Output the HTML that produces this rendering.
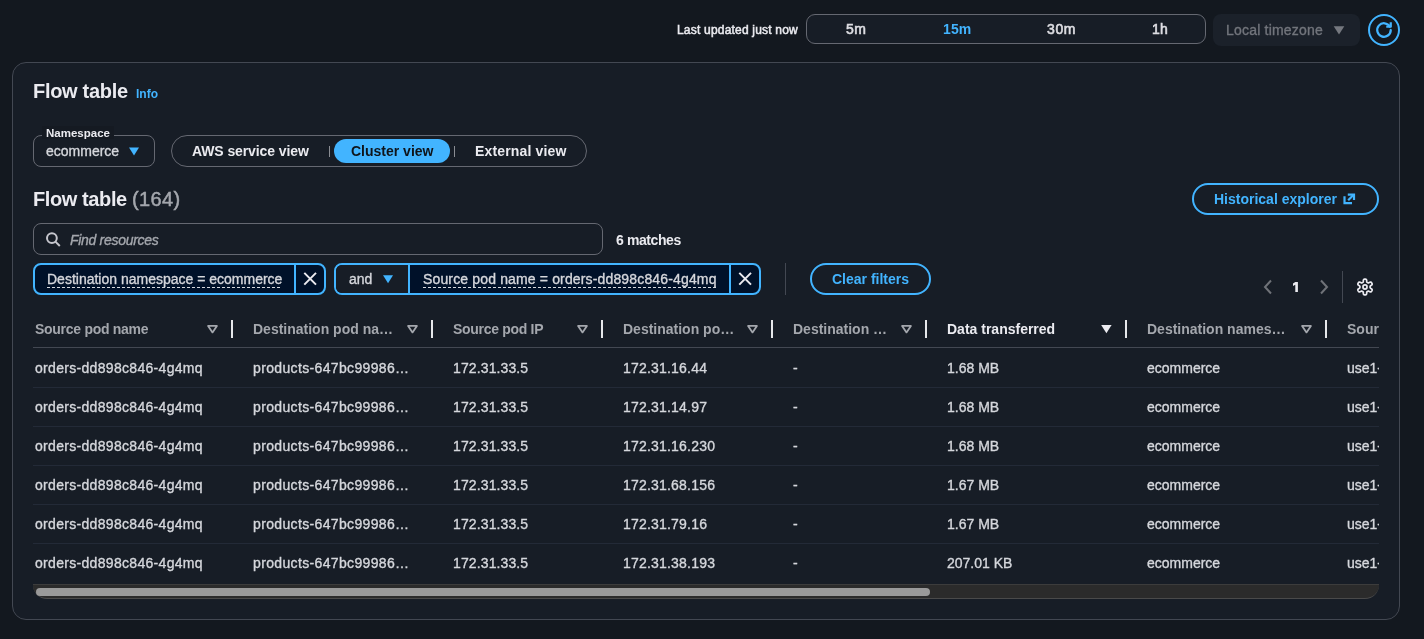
<!DOCTYPE html>
<html><head><meta charset="utf-8"><style>
html,body{margin:0;padding:0;}
body{width:1424px;height:639px;overflow:hidden;background:#13181f;position:relative;font-family:"Liberation Sans",sans-serif;}
.t{position:absolute;white-space:nowrap;will-change:transform;}
.r{position:absolute;}
</style></head><body>
<div class="t" style="left:677px;top:21.94px;font-size:12px;line-height:17px;font-weight:normal;color:#ebebf0;-webkit-text-stroke:0.35px #ebebf0;-webkit-text-stroke:0.5px #ebebf0;letter-spacing:0.2px;">Last updated just now</div>
<div class="r" style="left:806px;top:14px;width:400px;height:30px;background:#171d26;border:1px solid #656871;border-radius:9px;box-sizing:border-box;"></div>
<div class="t" style="left:845.6px;top:19.35px;font-size:14px;line-height:20px;font-weight:normal;color:#dedee3;-webkit-text-stroke:0.35px #dedee3;-webkit-text-stroke:0.6px #dedee3;letter-spacing:0.5px;">5m</div>
<div class="t" style="left:942.5px;top:19.35px;font-size:14px;line-height:20px;font-weight:bold;color:#42b4ff;letter-spacing:0.1px;">15m</div>
<div class="t" style="left:1046.6px;top:19.35px;font-size:14px;line-height:20px;font-weight:normal;color:#dedee3;-webkit-text-stroke:0.35px #dedee3;-webkit-text-stroke:0.6px #dedee3;letter-spacing:0.6px;">30m</div>
<div class="t" style="left:1151.6px;top:19.35px;font-size:14px;line-height:20px;font-weight:normal;color:#dedee3;-webkit-text-stroke:0.35px #dedee3;-webkit-text-stroke:0.6px #dedee3;letter-spacing:0.1px;">1h</div>
<div class="r" style="left:1213px;top:14px;width:147px;height:32px;background:#1b212a;border-radius:8px;"></div>
<div class="t" style="left:1225.5px;top:19.75px;font-size:14px;line-height:20px;font-weight:normal;color:#72757c;-webkit-text-stroke:0.35px #72757c;letter-spacing:0.2px;">Local timezone</div>
<svg class="r" style="left:1333px;top:26px" width="12" height="9" viewBox="0 0 12 9"><path d="M0.7 0.3 L11.3 0.3 L6 8.5 Z" fill="#75787f"/></svg>
<div class="r" style="left:1368px;top:14px;width:32px;height:32px;border:2px solid #42b4ff;border-radius:50%;box-sizing:border-box;"></div>
<svg class="r" style="left:1375px;top:21px" width="18" height="18" viewBox="0 0 16 16"><path d="M10 5 H14 V1" fill="none" stroke="#42b4ff" stroke-width="2" stroke-linejoin="round"/><path d="M14 8 A6 6 0 1 1 13.2 5" fill="none" stroke="#42b4ff" stroke-width="2" stroke-linecap="round"/></svg>
<div class="r" style="left:12px;top:62px;width:1388px;height:558px;background:#171d26;border:1px solid #434852;border-radius:14px;box-sizing:border-box;"></div>
<div class="t" style="left:32.6px;top:76.97px;font-size:20px;line-height:28px;font-weight:bold;color:#ebebf0;letter-spacing:-0.3px;">Flow table</div>
<div class="t" style="left:136.3px;top:86.14px;font-size:12px;line-height:17px;font-weight:bold;color:#42b4ff;">Info</div>
<div class="r" style="left:33px;top:135px;width:122px;height:32px;border:1px solid #656871;border-radius:8px;box-sizing:border-box;"></div>
<div class="r" style="left:42px;top:126px;width:72px;height:13px;background:#151a22;"></div>
<div class="t" style="left:45.8px;top:124.91px;font-size:11.5px;line-height:16px;font-weight:bold;color:#ebebf0;">Namespace</div>
<div class="t" style="left:45.8px;top:140.95px;font-size:14px;line-height:20px;font-weight:normal;color:#d5d7dc;-webkit-text-stroke:0.35px #d5d7dc;">ecommerce</div>
<svg class="r" style="left:128px;top:147px" width="12" height="9" viewBox="0 0 12 9"><path d="M1 0.5 L11 0.5 L6 8.5 Z" fill="#42b4ff"/></svg>
<div class="r" style="left:171px;top:135px;width:416px;height:32px;border:1px solid #656871;border-radius:16px;box-sizing:border-box;"></div>
<div class="t" style="left:192px;top:140.85px;font-size:14px;line-height:20px;font-weight:bold;color:#ebebf0;letter-spacing:-0.1px;">AWS service view</div>
<div class="r" style="left:329px;top:146px;width:1px;height:11px;background:#8a8d93;"></div>
<div class="r" style="left:334px;top:139px;width:116px;height:24px;background:#42b4ff;border-radius:12px;"></div>
<div class="t" style="left:350.5px;top:140.85px;font-size:14px;line-height:20px;font-weight:bold;color:#0f141a;">Cluster view</div>
<div class="r" style="left:454px;top:146px;width:1px;height:11px;background:#8a8d93;"></div>
<div class="t" style="left:475.3px;top:140.85px;font-size:14px;line-height:20px;font-weight:bold;color:#ebebf0;letter-spacing:0.15px;">External view</div>
<div class="t" style="left:32.6px;top:185.37px;font-size:20px;line-height:28px;font-weight:bold;color:#ebebf0;letter-spacing:-0.4px;">Flow table <span style="font-weight:normal;color:#a4a7ad;-webkit-text-stroke:0.5px #a4a7ad;letter-spacing:0.4px">(164)</span></div>
<div class="r" style="left:1192px;top:183px;width:187px;height:32px;border:2px solid #42b4ff;border-radius:16px;box-sizing:border-box;"></div>
<div class="t" style="left:1214.3px;top:189.15px;font-size:14px;line-height:20px;font-weight:bold;color:#42b4ff;">Historical explorer</div>
<svg class="r" style="left:1342px;top:192px" width="14" height="14" viewBox="0 0 14 14"><path d="M2.5 4.2 V11.2 H10" fill="none" stroke="#42b4ff" stroke-width="2.2"/><path d="M5.8 2.6 H12 V8" fill="none" stroke="#42b4ff" stroke-width="2.2"/><path d="M6.2 8.2 L11.6 2.8" fill="none" stroke="#42b4ff" stroke-width="2.2"/></svg>
<div class="r" style="left:33px;top:223px;width:570px;height:32px;border:1px solid #656871;border-radius:8px;box-sizing:border-box;"></div>
<svg class="r" style="left:45px;top:231px" width="16" height="16" viewBox="0 0 16 16"><circle cx="6.9" cy="7.1" r="4.9" fill="none" stroke="#c6c6cd" stroke-width="2"/><path d="M10.4 10.6 L14.8 15" stroke="#c6c6cd" stroke-width="2"/></svg>
<div class="t" style="left:69.8px;top:230.15px;font-size:14px;line-height:20px;font-weight:normal;color:#a4a7ad;-webkit-text-stroke:0.35px #a4a7ad;font-style:italic;letter-spacing:-0.3px;">Find resources</div>
<div class="t" style="left:616px;top:230.15px;font-size:14px;line-height:20px;font-weight:bold;color:#ebebf0;letter-spacing:-0.4px;">6 matches</div>
<div class="r" style="left:33px;top:263px;width:293px;height:32px;background:#001129;border:2px solid #42b4ff;border-radius:8px;box-sizing:border-box;"></div>
<div class="r" style="left:294px;top:263px;width:2px;height:32px;background:#42b4ff;"></div>
<div class="t" style="left:46.9px;top:268.95px;font-size:14px;line-height:20px;font-weight:normal;color:#d5d7dc;-webkit-text-stroke:0.35px #d5d7dc;">Destination namespace = ecommerce</div>
<div class="r" style="left:47px;top:287px;width:235px;height:1px;background:repeating-linear-gradient(90deg,#d5d7dc 0 3px,transparent 3px 5px);"></div>
<svg class="r" style="left:302px;top:270px" width="16" height="16" viewBox="0 0 16 16"><path d="M2.3 2.9 L14 14.6 M14 2.9 L2.3 14.6" stroke="#ebebf0" stroke-width="2"/></svg>
<div class="r" style="left:334px;top:263px;width:427px;height:32px;background:#001129;border:2px solid #42b4ff;border-radius:8px;box-sizing:border-box;"></div>
<div class="r" style="left:336px;top:265px;width:72px;height:28px;background:#171d26;border-radius:6px 0 0 6px;"></div>
<div class="r" style="left:408px;top:263px;width:2px;height:32px;background:#42b4ff;"></div>
<div class="r" style="left:729px;top:263px;width:2px;height:32px;background:#42b4ff;"></div>
<div class="t" style="left:348.8px;top:268.95px;font-size:14px;line-height:20px;font-weight:normal;color:#d5d7dc;-webkit-text-stroke:0.35px #d5d7dc;">and</div>
<svg class="r" style="left:382px;top:275px" width="12" height="9" viewBox="0 0 12 9"><path d="M1 0.3 L11 0.3 L6 8.3 Z" fill="#42b4ff"/></svg>
<div class="t" style="left:422.6px;top:268.95px;font-size:14px;line-height:20px;font-weight:normal;color:#d5d7dc;-webkit-text-stroke:0.35px #d5d7dc;letter-spacing:0.15px;">Source pod name = orders-dd898c846-4g4mq</div>
<div class="r" style="left:423px;top:287px;width:294px;height:1px;background:repeating-linear-gradient(90deg,#d5d7dc 0 3px,transparent 3px 5px);"></div>
<svg class="r" style="left:737px;top:270px" width="16" height="16" viewBox="0 0 16 16"><path d="M2.3 2.9 L14 14.6 M14 2.9 L2.3 14.6" stroke="#ebebf0" stroke-width="2"/></svg>
<div class="r" style="left:785px;top:263px;width:1px;height:32px;background:#434852;"></div>
<div class="r" style="left:810px;top:263px;width:121px;height:32px;border:2px solid #42b4ff;border-radius:16px;box-sizing:border-box;"></div>
<div class="t" style="left:831.8px;top:268.95px;font-size:14px;line-height:20px;font-weight:bold;color:#42b4ff;">Clear filters</div>
<svg class="r" style="left:1262px;top:279px" width="12" height="16" viewBox="0 0 12 16"><path d="M9 1.5 L3 8 L9 14.5" fill="none" stroke="#6f7278" stroke-width="2"/></svg>
<svg class="r" style="left:1290px;top:280px" width="12" height="14" viewBox="0 0 12 14"><polygon points="5.3,1.9 7.9,1.9 7.9,12 5.3,12 5.3,4.8 3.0,5.9 3.0,3.5" fill="#ebebf0"/></svg>
<svg class="r" style="left:1318px;top:279px" width="12" height="16" viewBox="0 0 12 16"><path d="M3 1.5 L9 8 L3 14.5" fill="none" stroke="#6f7278" stroke-width="2"/></svg>
<div class="r" style="left:1342px;top:271px;width:1px;height:32px;background:#434852;"></div>
<svg class="r" style="left:1356px;top:278px" width="18" height="18" viewBox="-0.9 -0.9 17.8 17.8"><path d="M8.00 0.25 L8.27 0.26 L8.54 0.28 L8.81 0.34 L9.06 0.43 L9.30 0.61 L9.50 0.94 L9.62 1.49 L9.68 2.15 L9.72 2.69 L9.81 3.03 L9.93 3.22 L10.07 3.35 L10.22 3.45 L10.37 3.54 L10.53 3.63 L10.68 3.71 L10.83 3.80 L10.99 3.88 L11.17 3.94 L11.40 3.95 L11.73 3.85 L12.23 3.62 L12.83 3.34 L13.36 3.17 L13.75 3.17 L14.02 3.29 L14.24 3.47 L14.41 3.67 L14.57 3.89 L14.71 4.12 L14.84 4.36 L14.95 4.61 L15.04 4.87 L15.09 5.14 L15.05 5.43 L14.86 5.77 L14.45 6.15 L13.91 6.53 L13.46 6.84 L13.21 7.08 L13.10 7.28 L13.07 7.47 L13.05 7.65 L13.05 7.82 L13.05 8.00 L13.05 8.18 L13.05 8.35 L13.07 8.53 L13.10 8.72 L13.21 8.92 L13.46 9.16 L13.91 9.47 L14.45 9.85 L14.86 10.23 L15.05 10.57 L15.09 10.86 L15.04 11.13 L14.95 11.39 L14.84 11.64 L14.71 11.87 L14.57 12.11 L14.41 12.33 L14.24 12.53 L14.02 12.71 L13.75 12.83 L13.36 12.83 L12.83 12.66 L12.23 12.38 L11.73 12.15 L11.40 12.05 L11.17 12.06 L10.99 12.12 L10.83 12.20 L10.68 12.29 L10.53 12.37 L10.37 12.46 L10.22 12.55 L10.07 12.65 L9.93 12.78 L9.81 12.97 L9.72 13.31 L9.68 13.85 L9.62 14.51 L9.50 15.06 L9.30 15.39 L9.06 15.57 L8.81 15.66 L8.54 15.72 L8.27 15.74 L8.00 15.75 L7.73 15.74 L7.46 15.72 L7.19 15.66 L6.94 15.57 L6.70 15.39 L6.50 15.06 L6.38 14.51 L6.32 13.85 L6.28 13.31 L6.19 12.97 L6.07 12.78 L5.93 12.65 L5.78 12.55 L5.63 12.46 L5.47 12.37 L5.32 12.29 L5.17 12.20 L5.01 12.12 L4.83 12.06 L4.60 12.05 L4.27 12.15 L3.77 12.38 L3.17 12.66 L2.64 12.83 L2.25 12.83 L1.98 12.71 L1.76 12.53 L1.59 12.33 L1.43 12.11 L1.29 11.88 L1.16 11.64 L1.05 11.39 L0.96 11.13 L0.91 10.86 L0.95 10.57 L1.14 10.23 L1.55 9.85 L2.09 9.47 L2.54 9.16 L2.79 8.92 L2.90 8.72 L2.93 8.53 L2.95 8.35 L2.95 8.18 L2.95 8.00 L2.95 7.82 L2.95 7.65 L2.93 7.47 L2.90 7.28 L2.79 7.08 L2.54 6.84 L2.09 6.53 L1.55 6.15 L1.14 5.77 L0.95 5.43 L0.91 5.14 L0.96 4.87 L1.05 4.61 L1.16 4.36 L1.29 4.12 L1.43 3.89 L1.59 3.67 L1.76 3.47 L1.98 3.29 L2.25 3.17 L2.64 3.17 L3.17 3.34 L3.77 3.62 L4.27 3.85 L4.60 3.95 L4.83 3.94 L5.01 3.88 L5.17 3.80 L5.32 3.71 L5.47 3.63 L5.63 3.54 L5.78 3.45 L5.93 3.35 L6.07 3.22 L6.19 3.03 L6.28 2.69 L6.32 2.15 L6.38 1.49 L6.50 0.94 L6.70 0.61 L6.94 0.43 L7.19 0.34 L7.46 0.28 L7.73 0.26Z" fill="none" stroke="#ebebf0" stroke-width="1.7" stroke-linejoin="round"/><circle cx="8" cy="8" r="2" fill="none" stroke="#ebebf0" stroke-width="1.7"/></svg>
<div class="r" style="left:33px;top:300px;width:1346px;height:300px;overflow:hidden;">
<div class="t" style="left:2px;top:19.15px;font-size:14px;line-height:20px;font-weight:bold;color:#a4a7ad;white-space:nowrap;letter-spacing:-0.28px;">Source pod name</div>
<svg class="r" style="left:174px;top:25px" width="12" height="9" viewBox="0 0 12 9"><path d="M1.1 0.9 L9.9 0.9 L5.5 7.4 Z" fill="none" stroke="#a4a7ad" stroke-width="1.8" stroke-linejoin="round"/></svg>
<div class="r" style="left:198px;top:20px;width:2px;height:18px;background:#e6e7ea;"></div>
<div class="t" style="left:220px;top:19.15px;font-size:14px;line-height:20px;font-weight:bold;color:#a4a7ad;white-space:nowrap;">Destination pod na…</div>
<svg class="r" style="left:374px;top:25px" width="12" height="9" viewBox="0 0 12 9"><path d="M1.1 0.9 L9.9 0.9 L5.5 7.4 Z" fill="none" stroke="#a4a7ad" stroke-width="1.8" stroke-linejoin="round"/></svg>
<div class="r" style="left:398px;top:20px;width:2px;height:18px;background:#e6e7ea;"></div>
<div class="t" style="left:420px;top:19.15px;font-size:14px;line-height:20px;font-weight:bold;color:#a4a7ad;white-space:nowrap;letter-spacing:-0.3px;">Source pod IP</div>
<svg class="r" style="left:544px;top:25px" width="12" height="9" viewBox="0 0 12 9"><path d="M1.1 0.9 L9.9 0.9 L5.5 7.4 Z" fill="none" stroke="#a4a7ad" stroke-width="1.8" stroke-linejoin="round"/></svg>
<div class="r" style="left:568px;top:20px;width:2px;height:18px;background:#e6e7ea;"></div>
<div class="t" style="left:590px;top:19.15px;font-size:14px;line-height:20px;font-weight:bold;color:#a4a7ad;white-space:nowrap;">Destination po…</div>
<svg class="r" style="left:714px;top:25px" width="12" height="9" viewBox="0 0 12 9"><path d="M1.1 0.9 L9.9 0.9 L5.5 7.4 Z" fill="none" stroke="#a4a7ad" stroke-width="1.8" stroke-linejoin="round"/></svg>
<div class="r" style="left:738px;top:20px;width:2px;height:18px;background:#e6e7ea;"></div>
<div class="t" style="left:760px;top:19.15px;font-size:14px;line-height:20px;font-weight:bold;color:#a4a7ad;white-space:nowrap;">Destination …</div>
<svg class="r" style="left:868px;top:25px" width="12" height="9" viewBox="0 0 12 9"><path d="M1.1 0.9 L9.9 0.9 L5.5 7.4 Z" fill="none" stroke="#a4a7ad" stroke-width="1.8" stroke-linejoin="round"/></svg>
<div class="r" style="left:892px;top:20px;width:2px;height:18px;background:#e6e7ea;"></div>
<div class="t" style="left:914px;top:19.15px;font-size:14px;line-height:20px;font-weight:bold;color:#ebebf0;white-space:nowrap;">Data transferred</div>
<svg class="r" style="left:1068px;top:25px" width="12" height="9" viewBox="0 0 12 9"><path d="M0.2 0 L10.6 0 L5.4 8.2 Z" fill="#ebebf0"/></svg>
<div class="r" style="left:1092px;top:20px;width:2px;height:18px;background:#e6e7ea;"></div>
<div class="t" style="left:1114px;top:19.15px;font-size:14px;line-height:20px;font-weight:bold;color:#a4a7ad;white-space:nowrap;">Destination names…</div>
<svg class="r" style="left:1268px;top:25px" width="12" height="9" viewBox="0 0 12 9"><path d="M1.1 0.9 L9.9 0.9 L5.5 7.4 Z" fill="none" stroke="#a4a7ad" stroke-width="1.8" stroke-linejoin="round"/></svg>
<div class="r" style="left:1292px;top:20px;width:2px;height:18px;background:#e6e7ea;"></div>
<div class="t" style="left:1314px;top:19.15px;font-size:14px;line-height:20px;font-weight:bold;color:#a4a7ad;white-space:nowrap;">Source pod name</div>
<div class="r" style="left:0px;top:47px;width:1346px;height:1px;background:#434852;"></div>
<div class="t" style="left:2px;top:58.15px;font-size:14px;line-height:20px;font-weight:normal;color:#d5d7dc;-webkit-text-stroke:0.35px #d5d7dc;white-space:nowrap;letter-spacing:0.31px;">orders-dd898c846-4g4mq</div>
<div class="t" style="left:220px;top:58.15px;font-size:14px;line-height:20px;font-weight:normal;color:#d5d7dc;-webkit-text-stroke:0.35px #d5d7dc;white-space:nowrap;letter-spacing:0.35px;">products-647bc99986…</div>
<div class="t" style="left:420px;top:58.15px;font-size:14px;line-height:20px;font-weight:normal;color:#d5d7dc;-webkit-text-stroke:0.35px #d5d7dc;white-space:nowrap;letter-spacing:0.12px;">172.31.33.5</div>
<div class="t" style="left:590px;top:58.15px;font-size:14px;line-height:20px;font-weight:normal;color:#d5d7dc;-webkit-text-stroke:0.35px #d5d7dc;white-space:nowrap;letter-spacing:0.2px;">172.31.16.44</div>
<div class="t" style="left:760px;top:58.15px;font-size:14px;line-height:20px;font-weight:normal;color:#d5d7dc;-webkit-text-stroke:0.35px #d5d7dc;white-space:nowrap;">-</div>
<div class="t" style="left:914px;top:58.15px;font-size:14px;line-height:20px;font-weight:normal;color:#d5d7dc;-webkit-text-stroke:0.35px #d5d7dc;white-space:nowrap;">1.68 MB</div>
<div class="t" style="left:1114px;top:58.15px;font-size:14px;line-height:20px;font-weight:normal;color:#d5d7dc;-webkit-text-stroke:0.35px #d5d7dc;white-space:nowrap;">ecommerce</div>
<div class="t" style="left:1314px;top:58.15px;font-size:14px;line-height:20px;font-weight:normal;color:#d5d7dc;-webkit-text-stroke:0.35px #d5d7dc;white-space:nowrap;">use1-az6-...</div>
<div class="r" style="left:0px;top:87px;width:1346px;height:1px;background:#232a37;"></div>
<div class="t" style="left:2px;top:97.15px;font-size:14px;line-height:20px;font-weight:normal;color:#d5d7dc;-webkit-text-stroke:0.35px #d5d7dc;white-space:nowrap;letter-spacing:0.31px;">orders-dd898c846-4g4mq</div>
<div class="t" style="left:220px;top:97.15px;font-size:14px;line-height:20px;font-weight:normal;color:#d5d7dc;-webkit-text-stroke:0.35px #d5d7dc;white-space:nowrap;letter-spacing:0.35px;">products-647bc99986…</div>
<div class="t" style="left:420px;top:97.15px;font-size:14px;line-height:20px;font-weight:normal;color:#d5d7dc;-webkit-text-stroke:0.35px #d5d7dc;white-space:nowrap;letter-spacing:0.12px;">172.31.33.5</div>
<div class="t" style="left:590px;top:97.15px;font-size:14px;line-height:20px;font-weight:normal;color:#d5d7dc;-webkit-text-stroke:0.35px #d5d7dc;white-space:nowrap;letter-spacing:0.2px;">172.31.14.97</div>
<div class="t" style="left:760px;top:97.15px;font-size:14px;line-height:20px;font-weight:normal;color:#d5d7dc;-webkit-text-stroke:0.35px #d5d7dc;white-space:nowrap;">-</div>
<div class="t" style="left:914px;top:97.15px;font-size:14px;line-height:20px;font-weight:normal;color:#d5d7dc;-webkit-text-stroke:0.35px #d5d7dc;white-space:nowrap;">1.68 MB</div>
<div class="t" style="left:1114px;top:97.15px;font-size:14px;line-height:20px;font-weight:normal;color:#d5d7dc;-webkit-text-stroke:0.35px #d5d7dc;white-space:nowrap;">ecommerce</div>
<div class="t" style="left:1314px;top:97.15px;font-size:14px;line-height:20px;font-weight:normal;color:#d5d7dc;-webkit-text-stroke:0.35px #d5d7dc;white-space:nowrap;">use1-az6-...</div>
<div class="r" style="left:0px;top:126px;width:1346px;height:1px;background:#232a37;"></div>
<div class="t" style="left:2px;top:136.15px;font-size:14px;line-height:20px;font-weight:normal;color:#d5d7dc;-webkit-text-stroke:0.35px #d5d7dc;white-space:nowrap;letter-spacing:0.31px;">orders-dd898c846-4g4mq</div>
<div class="t" style="left:220px;top:136.15px;font-size:14px;line-height:20px;font-weight:normal;color:#d5d7dc;-webkit-text-stroke:0.35px #d5d7dc;white-space:nowrap;letter-spacing:0.35px;">products-647bc99986…</div>
<div class="t" style="left:420px;top:136.15px;font-size:14px;line-height:20px;font-weight:normal;color:#d5d7dc;-webkit-text-stroke:0.35px #d5d7dc;white-space:nowrap;letter-spacing:0.12px;">172.31.33.5</div>
<div class="t" style="left:590px;top:136.15px;font-size:14px;line-height:20px;font-weight:normal;color:#d5d7dc;-webkit-text-stroke:0.35px #d5d7dc;white-space:nowrap;letter-spacing:0.2px;">172.31.16.230</div>
<div class="t" style="left:760px;top:136.15px;font-size:14px;line-height:20px;font-weight:normal;color:#d5d7dc;-webkit-text-stroke:0.35px #d5d7dc;white-space:nowrap;">-</div>
<div class="t" style="left:914px;top:136.15px;font-size:14px;line-height:20px;font-weight:normal;color:#d5d7dc;-webkit-text-stroke:0.35px #d5d7dc;white-space:nowrap;">1.68 MB</div>
<div class="t" style="left:1114px;top:136.15px;font-size:14px;line-height:20px;font-weight:normal;color:#d5d7dc;-webkit-text-stroke:0.35px #d5d7dc;white-space:nowrap;">ecommerce</div>
<div class="t" style="left:1314px;top:136.15px;font-size:14px;line-height:20px;font-weight:normal;color:#d5d7dc;-webkit-text-stroke:0.35px #d5d7dc;white-space:nowrap;">use1-az6-...</div>
<div class="r" style="left:0px;top:165px;width:1346px;height:1px;background:#232a37;"></div>
<div class="t" style="left:2px;top:175.15px;font-size:14px;line-height:20px;font-weight:normal;color:#d5d7dc;-webkit-text-stroke:0.35px #d5d7dc;white-space:nowrap;letter-spacing:0.31px;">orders-dd898c846-4g4mq</div>
<div class="t" style="left:220px;top:175.15px;font-size:14px;line-height:20px;font-weight:normal;color:#d5d7dc;-webkit-text-stroke:0.35px #d5d7dc;white-space:nowrap;letter-spacing:0.35px;">products-647bc99986…</div>
<div class="t" style="left:420px;top:175.15px;font-size:14px;line-height:20px;font-weight:normal;color:#d5d7dc;-webkit-text-stroke:0.35px #d5d7dc;white-space:nowrap;letter-spacing:0.12px;">172.31.33.5</div>
<div class="t" style="left:590px;top:175.15px;font-size:14px;line-height:20px;font-weight:normal;color:#d5d7dc;-webkit-text-stroke:0.35px #d5d7dc;white-space:nowrap;letter-spacing:0.2px;">172.31.68.156</div>
<div class="t" style="left:760px;top:175.15px;font-size:14px;line-height:20px;font-weight:normal;color:#d5d7dc;-webkit-text-stroke:0.35px #d5d7dc;white-space:nowrap;">-</div>
<div class="t" style="left:914px;top:175.15px;font-size:14px;line-height:20px;font-weight:normal;color:#d5d7dc;-webkit-text-stroke:0.35px #d5d7dc;white-space:nowrap;">1.67 MB</div>
<div class="t" style="left:1114px;top:175.15px;font-size:14px;line-height:20px;font-weight:normal;color:#d5d7dc;-webkit-text-stroke:0.35px #d5d7dc;white-space:nowrap;">ecommerce</div>
<div class="t" style="left:1314px;top:175.15px;font-size:14px;line-height:20px;font-weight:normal;color:#d5d7dc;-webkit-text-stroke:0.35px #d5d7dc;white-space:nowrap;">use1-az6-...</div>
<div class="r" style="left:0px;top:204px;width:1346px;height:1px;background:#232a37;"></div>
<div class="t" style="left:2px;top:214.15px;font-size:14px;line-height:20px;font-weight:normal;color:#d5d7dc;-webkit-text-stroke:0.35px #d5d7dc;white-space:nowrap;letter-spacing:0.31px;">orders-dd898c846-4g4mq</div>
<div class="t" style="left:220px;top:214.15px;font-size:14px;line-height:20px;font-weight:normal;color:#d5d7dc;-webkit-text-stroke:0.35px #d5d7dc;white-space:nowrap;letter-spacing:0.35px;">products-647bc99986…</div>
<div class="t" style="left:420px;top:214.15px;font-size:14px;line-height:20px;font-weight:normal;color:#d5d7dc;-webkit-text-stroke:0.35px #d5d7dc;white-space:nowrap;letter-spacing:0.12px;">172.31.33.5</div>
<div class="t" style="left:590px;top:214.15px;font-size:14px;line-height:20px;font-weight:normal;color:#d5d7dc;-webkit-text-stroke:0.35px #d5d7dc;white-space:nowrap;letter-spacing:0.2px;">172.31.79.16</div>
<div class="t" style="left:760px;top:214.15px;font-size:14px;line-height:20px;font-weight:normal;color:#d5d7dc;-webkit-text-stroke:0.35px #d5d7dc;white-space:nowrap;">-</div>
<div class="t" style="left:914px;top:214.15px;font-size:14px;line-height:20px;font-weight:normal;color:#d5d7dc;-webkit-text-stroke:0.35px #d5d7dc;white-space:nowrap;">1.67 MB</div>
<div class="t" style="left:1114px;top:214.15px;font-size:14px;line-height:20px;font-weight:normal;color:#d5d7dc;-webkit-text-stroke:0.35px #d5d7dc;white-space:nowrap;">ecommerce</div>
<div class="t" style="left:1314px;top:214.15px;font-size:14px;line-height:20px;font-weight:normal;color:#d5d7dc;-webkit-text-stroke:0.35px #d5d7dc;white-space:nowrap;">use1-az6-...</div>
<div class="r" style="left:0px;top:243px;width:1346px;height:1px;background:#232a37;"></div>
<div class="t" style="left:2px;top:253.15px;font-size:14px;line-height:20px;font-weight:normal;color:#d5d7dc;-webkit-text-stroke:0.35px #d5d7dc;white-space:nowrap;letter-spacing:0.31px;">orders-dd898c846-4g4mq</div>
<div class="t" style="left:220px;top:253.15px;font-size:14px;line-height:20px;font-weight:normal;color:#d5d7dc;-webkit-text-stroke:0.35px #d5d7dc;white-space:nowrap;letter-spacing:0.35px;">products-647bc99986…</div>
<div class="t" style="left:420px;top:253.15px;font-size:14px;line-height:20px;font-weight:normal;color:#d5d7dc;-webkit-text-stroke:0.35px #d5d7dc;white-space:nowrap;letter-spacing:0.12px;">172.31.33.5</div>
<div class="t" style="left:590px;top:253.15px;font-size:14px;line-height:20px;font-weight:normal;color:#d5d7dc;-webkit-text-stroke:0.35px #d5d7dc;white-space:nowrap;letter-spacing:0.2px;">172.31.38.193</div>
<div class="t" style="left:760px;top:253.15px;font-size:14px;line-height:20px;font-weight:normal;color:#d5d7dc;-webkit-text-stroke:0.35px #d5d7dc;white-space:nowrap;">-</div>
<div class="t" style="left:914px;top:253.15px;font-size:14px;line-height:20px;font-weight:normal;color:#d5d7dc;-webkit-text-stroke:0.35px #d5d7dc;white-space:nowrap;">207.01 KB</div>
<div class="t" style="left:1114px;top:253.15px;font-size:14px;line-height:20px;font-weight:normal;color:#d5d7dc;-webkit-text-stroke:0.35px #d5d7dc;white-space:nowrap;">ecommerce</div>
<div class="t" style="left:1314px;top:253.15px;font-size:14px;line-height:20px;font-weight:normal;color:#d5d7dc;-webkit-text-stroke:0.35px #d5d7dc;white-space:nowrap;">use1-az6-...</div>
</div>
<div class="r" style="left:33px;top:584px;width:1346px;height:15px;background:#2b2b2b;border-top:1px solid #3c3c3c;border-bottom:1px solid #4a4a4a;border-radius:0 0 14px 14px;box-sizing:border-box;"></div>
<div class="r" style="left:36px;top:588px;width:894px;height:8px;background:#9a9a9a;border-radius:4px;"></div>
</body></html>
